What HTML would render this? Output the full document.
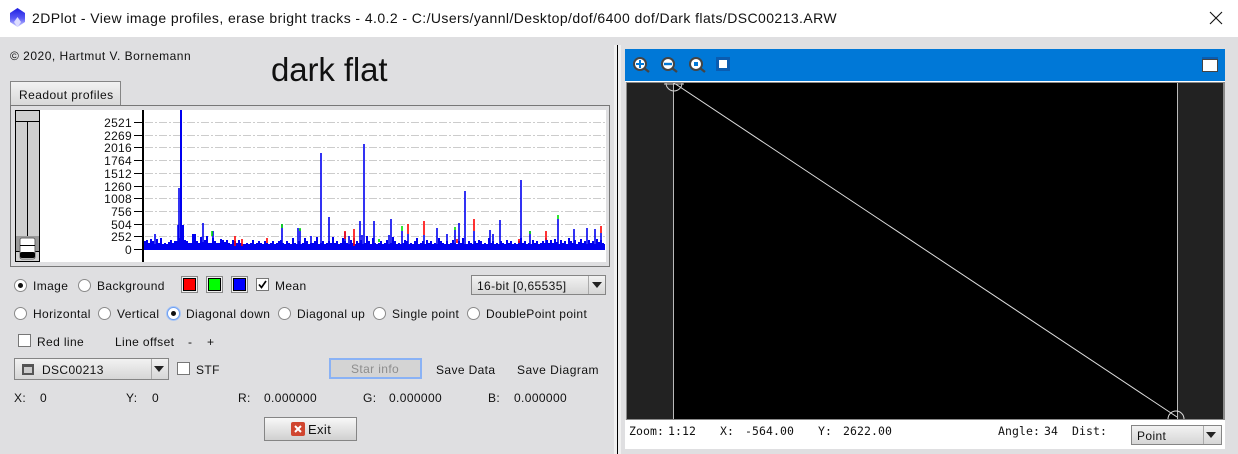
<!DOCTYPE html>
<html><head><meta charset="utf-8">
<style>
html,body{margin:0;padding:0;width:1238px;height:454px;overflow:hidden;background:#dfdfe1}
body{position:relative;font-family:"Liberation Sans",sans-serif;font-size:12px;letter-spacing:.38px;color:#111}
div,span{position:absolute;box-sizing:border-box;white-space:nowrap}
.t{line-height:14px;height:14px}
.r{width:13px;height:13px;border-radius:50%;border:1px solid #8a8a8a;background:#fff}
.r.on::after{content:"";position:absolute;left:3px;top:3px;width:5px;height:5px;border-radius:50%;background:#111}
.c{width:13px;height:13px;border:1px solid #777;background:#fff}
.sw{width:17px;height:17px;border:1px solid #888;background:#eee}
.sw i{position:absolute;left:1px;top:1px;width:13px;height:13px;border:1px solid #000;display:block;box-sizing:border-box}
.btn{border:1px solid #858585;background:linear-gradient(#f6f6f6,#d2d2d2)}
.m{font-family:"DejaVu Sans Mono","Liberation Mono",monospace;font-size:11.5px;letter-spacing:.08px;line-height:14px;height:14px}
</style></head><body>
<div style="left:0;top:0;width:1238px;height:37px;background:#fff"></div>
<svg style="position:absolute;left:9px;top:8px" width="17" height="20" viewBox="0 0 17 20"><defs><linearGradient id="g" x1="0" y1="0" x2="0" y2="1"><stop offset="0" stop-color="#1c1ce0"/><stop offset=".55" stop-color="#5a5af5"/><stop offset="1" stop-color="#d0d0ff"/></linearGradient></defs><polygon points="8.5,0 16,5 16,14 8.5,19 1,14 1,5" fill="url(#g)"/><polygon points="8.5,9 12,14 8.5,19 5,14" fill="#dcdcff"/></svg>
<div style="left:32px;top:9px;font-size:14px;letter-spacing:.42px;line-height:18px;color:#111">2DPlot - View image profiles, erase bright tracks - 4.0.2 - C:/Users/yannl/Desktop/dof/6400 dof/Dark flats/DSC00213.ARW</div>
<svg style="position:absolute;left:1209px;top:11px" width="14" height="14"><path d="M1 1L13 13M13 1L1 13" stroke="#111" stroke-width="1.1"/></svg>

<div class="t" style="left:10px;top:49px;letter-spacing:.5px">© 2020, Hartmut V. Bornemann</div>
<div style="left:271px;top:50px;font-size:33px;line-height:40px;letter-spacing:-.1px;color:#111">dark flat</div>

<div class="btn" style="left:10px;top:81px;width:111px;height:25px;background:linear-gradient(#f2f2f2,#d8d8d8)"></div>
<div class="t" style="left:19px;top:88px;letter-spacing:.45px">Readout profiles</div>
<div style="left:10px;top:105px;width:600px;height:162px;border:1px solid #777;background:#dfdfe1"></div>

<svg style="position:absolute;left:0;top:0" width="620" height="270">
<rect x="15" y="110" width="591" height="152" fill="#fff"/>
<rect x="15.5" y="110.5" width="24" height="151" fill="#cfcfcf" stroke="#000"/>
<path d="M16 121.5H39" stroke="#000"/>
<path d="M27.5 122V236" stroke="#000"/>
<rect x="16" y="236" width="23" height="15" fill="#9a9a9a"/>
<path d="M16 251.5H39" stroke="#000"/>
<rect x="20" y="238" width="15" height="21" rx="2" fill="#fff" stroke="#666"/>
<path d="M20 245.5H35" stroke="#000"/>
<rect x="20" y="252" width="15" height="6" rx="2" fill="#000"/>
<g stroke="#ccc" stroke-dasharray="8 2 2 2" stroke-width="1">
<path d="M145 122.5H605M145 135.5H605M145 147.5H605M145 160.5H605M145 173.5H605M145 186.5H605M145 198.5H605M145 211.5H605M145 224.5H605M145 236.5H605"/>
</g>
<rect x="142" y="110" width="2" height="152" fill="#000"/>
<path d="M134 122.5h8M134 135.5h8M134 147.5h8M134 160.5h8M134 173.5h8M134 186.5h8M134 198.5h8M134 211.5h8M134 224.5h8M134 236.5h8M134 249.5h8" stroke="#000"/>
<rect x="144" y="244" width="461" height="6" fill="#0000f0"/>
<path fill="#0000f0" d="M144 250V241h2V240h2V243h2V239h2V241h2V245h2V239h2V243h2V238h2V245h2V243h2V246h2V242h2V240h2V243h2V241h2V241h2V238h2V235h2V225h2V240h2V241h2V243h2V243h2V234h2V234h2V241h2V243h2V237h2V242h2V240h2V236h2V243h2V243h2V238h2V241h2V243h2V243h2V239h2V240h2V242h2V240h2V243h2V245h2V240h2V241h2V243h2V240h2V243h2V246h2V245h2V243h2V245h2V243h2V240h2V245h2V243h2V241h2V243h2V245h2V241h2V243h2V245h2V243h2V241h2V245h2V243h2V241h2V240h2V243h2V245h2V241h2V243h2V245h2V238h2V243h2V245h2V241h2V246h2V243h2V238h2V241h2V245h2V243h2V243h2V241h2V237h2V245h2V243h2V241h2V245h2V243h2V241h2V243h2V237h2V243h2V241h2V245h2V243h2V238h2V241h2V243h2V245h2V240h2V243h2V244h2V241h2V243h2V240h2V245h2V243h2V236h2V241h2V245h2V238h2V243h2V245h2V243h2V241h2V245h2V243h2V240h2V245h2V243h2V237h2V241h2V245h2V243h2V245h2V243h2V240h2V241h2V245h2V243h2V245h2V241h2V238h2V245h2V243h2V241h2V245h2V240h2V243h2V241h2V245h2V243h2V245h2V238h2V241h2V243h2V245h2V241h2V245h2V243h2V240h2V243h2V245h2V241h2V243h2V238h2V245h2V245h2V241h2V243h2V245h2V241h2V243h2V240h2V241h2V245h2V243h2V245h2V238h2V243h2V241h2V245h2V243h2V245h2V241h2V243h2V245h2V240h2V243h2V241h2V245h2V243h2V245h2V241h2V238h2V243h2V241h2V245h2V243h2V245h2V240h2V243h2V241h2V245h2V243h2V241h2V243h2V240h2V243h2V244h2V250z"/>
<path fill="#0000f0" d="M544 250V243h2V241h2V244h2V240h2V243h2V239h2V242h2V244h2V240h2V243h2V241h2V244h2V238h2V241h2V243h2V240h2V244h2V242h2V239h2V243h2V241h2V244h2V240h2V243h2V241h2V244h2V239h2V242h2V240h2V243h2V250z"/>
<path stroke="#0000f0" stroke-width="2" fill="none" d="M181 250V110"/>
<path stroke="#0000f0" stroke-width="1.6" fill="none" d="M179 250V188M178 250V225M155 250V234M203 250V223M213 250V231M282 250V224M298 250V228M300 250V229M311 250V236M321 250V153M329 250V217M345 250V232M349 250V236M354 250V238M360 250V221M362 250V235M364 250V144M374 250V221M389 250V235M391 250V219M402 250V231M408 250V234M424 250V235M437 250V228M447 250V234M455 250V230M459 250V223M465 250V191M474 250V231M490 250V230M493 250V234M500 250V220M521 250V180M530 250V231M546 250V238M558 250V219M574 250V229M587 250V228M595 250V229M601 250V233"/>
<path stroke="#ff0000" stroke-width="1.6" fill="none" d="M235 236V246M345 231V239M354 229V246M408 224V234M424 221V235M474 219V231M546 231V240M601 226V233M242 239V246M267 238V243M457 239V243M519 239V243"/>
<path stroke="#00e000" stroke-width="1.6" fill="none" d="M212 231V236M282 224V228M300 228V231M402 226V231M455 227V230M558 215V219M530 231V234M379 239V242"/>
<g font-family="'Liberation Sans',sans-serif" font-size="12" letter-spacing=".3" fill="#111" text-anchor="end">
<text x="132" y="127">2521</text><text x="132" y="140">2269</text><text x="132" y="152">2016</text><text x="132" y="165">1764</text><text x="132" y="178">1512</text><text x="132" y="191">1260</text><text x="132" y="203">1008</text><text x="132" y="216">756</text><text x="132" y="229">504</text><text x="132" y="241">252</text><text x="132" y="254">0</text>
</g>
</svg>

<div class="r on" style="left:14px;top:279px"></div><div class="t" style="left:33px;top:279px">Image</div>
<div class="r" style="left:78px;top:279px"></div><div class="t" style="left:97px;top:279px">Background</div>
<div class="sw" style="left:181px;top:276px"><i style="background:#f00"></i></div>
<div class="sw" style="left:206px;top:276px"><i style="background:#0f0"></i></div>
<div class="sw" style="left:231px;top:276px"><i style="background:#00f"></i></div>
<div class="c" style="left:256px;top:278px"></div>
<svg style="position:absolute;left:256px;top:278px" width="13" height="13"><path d="M3 6.5L5.5 9.5L10 3" stroke="#000" stroke-width="1.7" fill="none"/></svg>
<div class="t" style="left:275px;top:279px">Mean</div>
<div class="btn" style="left:471px;top:275px;width:135px;height:20px;background:linear-gradient(#f2f2f2,#d6d6d6)"></div>
<div style="left:588px;top:276px;width:1px;height:18px;background:#aaa"></div>
<svg style="position:absolute;left:591px;top:282px" width="13" height="7"><path d="M1 0H11L6 6z" fill="#222"/></svg>
<div class="t" style="left:477px;top:279px">16-bit [0,65535]</div>

<div class="r" style="left:14px;top:307px"></div><div class="t" style="left:33px;top:307px">Horizontal</div>
<div class="r" style="left:98px;top:307px"></div><div class="t" style="left:117px;top:307px">Vertical</div>
<div class="r on" style="left:167px;top:307px;border:1px solid #6f9ff0;box-shadow:0 0 0 1px #a9c6f5"></div><div class="t" style="left:186px;top:307px">Diagonal down</div>
<div class="r" style="left:278px;top:307px"></div><div class="t" style="left:297px;top:307px">Diagonal up</div>
<div class="r" style="left:373px;top:307px"></div><div class="t" style="left:392px;top:307px">Single point</div>
<div class="r" style="left:467px;top:307px"></div><div class="t" style="left:486px;top:307px">DoublePoint point</div>

<div class="c" style="left:18px;top:334px"></div><div class="t" style="left:37px;top:335px">Red line</div>
<div class="t" style="left:115px;top:335px">Line offset</div><div class="t" style="left:188px;top:335px">-</div><div class="t" style="left:207px;top:335px">+</div>

<div class="btn" style="left:14px;top:358px;width:155px;height:22px;background:linear-gradient(#f2f2f2,#d6d6d6)"></div>
<div style="left:22px;top:364px;width:12px;height:11px;border:2px solid #555;border-top-width:3px;background:#ccc"></div>
<div class="t" style="left:42px;top:363px">DSC00213</div>
<div style="left:151px;top:359px;width:1px;height:20px;background:#aaa"></div>
<svg style="position:absolute;left:153px;top:366px" width="13" height="7"><path d="M1 0H11L6 6z" fill="#222"/></svg>
<div class="c" style="left:177px;top:362px"></div><div class="t" style="left:196px;top:363px">STF</div>
<div style="left:329px;top:358px;width:93px;height:21px;border:2px solid #8ab2f5;background:#d4d4d4"></div>
<div class="t" style="left:351px;top:362px;color:#8d8d8d">Star info</div>
<div class="t" style="left:436px;top:363px">Save Data</div>
<div class="t" style="left:517px;top:363px;letter-spacing:.5px">Save Diagram</div>

<div class="t" style="left:14px;top:391px">X:</div><div class="t" style="left:40px;top:391px">0</div>
<div class="t" style="left:126px;top:391px">Y:</div><div class="t" style="left:152px;top:391px">0</div>
<div class="t" style="left:238px;top:391px">R:</div><div class="t" style="left:264px;top:391px">0.000000</div>
<div class="t" style="left:363px;top:391px">G:</div><div class="t" style="left:389px;top:391px">0.000000</div>
<div class="t" style="left:488px;top:391px">B:</div><div class="t" style="left:514px;top:391px">0.000000</div>

<div class="btn" style="left:264px;top:417px;width:93px;height:24px;background:linear-gradient(#f8f8f8,#d0d0d0)"></div>
<div style="left:291px;top:422px;width:14px;height:14px;border-radius:2px;background:#d0452f"></div>
<svg style="position:absolute;left:291px;top:422px" width="14" height="14"><path d="M4 4L10 10M10 4L4 10" stroke="#fff" stroke-width="2"/></svg>
<div class="t" style="left:308px;top:423px;font-size:13px">Exit</div>

<div style="left:614px;top:45px;width:7px;height:409px;background:#f0f0f0"></div>
<div style="left:617px;top:45px;width:1px;height:409px;background:#000"></div>

<div style="left:625px;top:49px;width:600px;height:32px;background:#0078d7"></div>
<svg style="position:absolute;left:625px;top:49px" width="600" height="32">
<path d="M19 19L24 23M47 19L52 23M75 19L80 23" stroke="#444" stroke-width="2.4"/>
<g fill="#fff" stroke="#444" stroke-width="2"><circle cx="15" cy="15" r="6"/><circle cx="43" cy="15" r="6"/><circle cx="71" cy="15" r="6"/></g>
<path d="M11 15h8M15 11v8" stroke="#0078d7" stroke-width="2"/>
<path d="M39 15h8" stroke="#0078d7" stroke-width="2.4"/>
<rect x="69" y="13" width="4" height="4" fill="#0078d7"/>
<rect x="91" y="8" width="14" height="14" fill="#0a5cb0"/><rect x="94" y="11" width="8" height="8" fill="#fff"/>
<rect x="577" y="8" width="16" height="3" fill="#0a5cb0"/><rect x="577.5" y="10.5" width="15" height="12" fill="#fff" stroke="#444"/>
</svg>

<div style="left:625px;top:81px;width:600px;height:1px;background:#fff"></div>
<div style="left:626px;top:82px;width:599px;height:338px;background:#8a8a8a"></div>
<div style="left:627px;top:83px;width:46px;height:336px;background:#222"></div>
<div style="left:674px;top:83px;width:503px;height:336px;background:#000"></div>
<div style="left:1178px;top:83px;width:45px;height:336px;background:#222"></div>
<svg style="position:absolute;left:627px;top:83px;overflow:hidden" width="596" height="336">
<path d="M47 0L550 334" stroke="#ddd" stroke-width="1" fill="none"/>
<path d="M46.5 0V336M550.5 0V336" stroke="#bbb" stroke-width="1"/>
<circle cx="47" cy="0" r="8" fill="none" stroke="#ccc"/>
<path d="M37 1H57" stroke="#ccc"/>
<circle cx="549" cy="336" r="8" fill="none" stroke="#ddd"/>
</svg>

<div style="left:625px;top:420px;width:600px;height:29px;background:#fff"></div>
<div class="m" style="left:629px;top:424px">Zoom:</div><div class="m" style="left:668px;top:424px">1:12</div>
<div class="m" style="left:720px;top:424px">X:</div><div class="m" style="left:745px;top:424px">-564.00</div>
<div class="m" style="left:818px;top:424px">Y:</div><div class="m" style="left:843px;top:424px">2622.00</div>
<div class="m" style="left:998px;top:424px">Angle:</div><div class="m" style="left:1044px;top:424px">34</div>
<div class="m" style="left:1072px;top:424px">Dist:</div>
<div class="btn" style="left:1131px;top:425px;width:91px;height:20px;background:linear-gradient(#f2f2f2,#d6d6d6)"></div>
<div style="left:1203px;top:426px;width:1px;height:18px;background:#aaa"></div>
<svg style="position:absolute;left:1205px;top:432px" width="13" height="7"><path d="M1 0H11L6 6z" fill="#222"/></svg>
<div class="t" style="left:1137px;top:429px">Point</div>
</body></html>
